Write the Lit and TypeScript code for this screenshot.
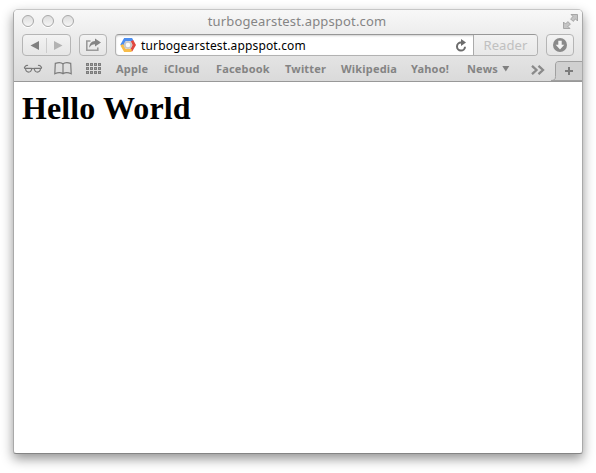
import { LitElement, html, css, svg } from "lit";
import { customElement } from "lit/decorators.js";

const bookmarks = [
  { label: "Apple", width: 48 },
  { label: "iCloud", width: 52 },
  { label: "Facebook", width: 69 },
  { label: "Twitter", width: 56 },
  { label: "Wikipedia", width: 70 },
  { label: "Yahoo!", width: 56 },
  { label: "News", width: 35 },
];

const gridDots = [0, 1, 2, 3].flatMap((c) =>
  [0, 1, 2].map(
    (r) => svg`<rect x=${c * 4 + 0.5} y=${r * 4 + 0.5} width="2" height="2" fill="#a0a0a0" stroke="#7d7d7d"/>`
  )
);

@customElement("app-root")
export class AppRoot extends LitElement {
  static styles = css`
    :host {
      display: block;
      box-sizing: border-box;
      height: 473px;
      padding: 9px 13px 19px;
      background: #fff;
      overflow: hidden;
      font-family: "Noto Sans", "Open Sans", sans-serif;
    }
    svg { display: block; flex: none; }
    .window {
      box-sizing: border-box;
      height: 445px;
      display: flex;
      flex-direction: column;
      border: 1px solid #a9a9a9;
      border-top-color: #c6c6c6;
      border-bottom-color: #858585;
      border-radius: 5px 5px 3px 3px;
      background: #fff;
      box-shadow: 0 5px 12px rgba(0, 0, 0, 0.42);
      overflow: hidden;
    }
    .chrome {
      flex: none;
      box-sizing: border-box;
      height: 72px;
      background: linear-gradient(#f8f8f8, #e9e9e9 45%, #dadada);
      border-bottom: 1px solid #989898;
    }
    .titlebar {
      display: grid;
      grid-template-columns: 60px 1fr 60px;
      height: 24px;
    }
    .lights { display: flex; gap: 8px; padding: 5px 0 0 8px; }
    .light {
      box-sizing: border-box;
      width: 12px;
      height: 12px;
      border: 1px solid #a8a8a8;
      border-radius: 50%;
      background: linear-gradient(#dcdcdc, #f5f5f5);
      box-shadow: 0 1px 0 #fff;
    }
    .title {
      text-align: center;
      font-size: 13px;
      line-height: 23px;
      letter-spacing: 0.16px;
      color: #858585;
      white-space: nowrap;
      padding-right: 2px;
    }
    .expand { justify-self: end; margin: 4px 4px 0 0; }
    .toolbar { display: flex; gap: 8px; height: 22px; padding: 0 8px; }
    .button {
      box-sizing: border-box;
      height: 22px;
      border: 1px solid #b5b5b5;
      border-radius: 4px;
      background: linear-gradient(#f3f3f3, #e6e6e6);
      display: flex;
      align-items: center;
      justify-content: center;
    }
    .nav { width: 49px; }
    .square { width: 28px; }
    .address {
      flex: 1;
      box-sizing: border-box;
      display: flex;
      align-items: center;
      border: 1px solid #b2b2b2;
      border-top-color: #979797;
      border-radius: 4px;
      background: #fff;
      box-shadow: inset 0 1px 2px rgba(0, 0, 0, 0.18);
      overflow: hidden;
    }
    .favicon { margin: 0 5px 0 4px; }
    .url {
      flex: 1;
      font-size: 12px;
      line-height: 20px;
      letter-spacing: 0.15px;
      color: #000;
      white-space: nowrap;
      padding-top: 1px;
    }
    .reload { margin: 1px 6px 0 0; }
    .reader {
      box-sizing: border-box;
      width: 64px;
      height: 20px;
      border-left: 1px solid #aaa;
      background: linear-gradient(#f2f2f2, #e8e8e8);
      text-align: center;
      font-size: 13px;
      line-height: 20px;
      letter-spacing: 0.1px;
      color: #c0c0c0;
    }
    .bookmarks { display: flex; height: 25px; }
    .tools { display: flex; width: 102px; box-sizing: border-box; padding: 6px 0 0 9px; }
    .book { margin-left: 11px; }
    .grid { margin: 1px 0 0 14px; }
    .link {
      font-size: 11px;
      line-height: 26px;
      font-weight: 700;
      letter-spacing: 0.18px;
      color: #848484;
      white-space: nowrap;
    }
    .caret { margin-top: 10px; }
    .more { margin: 9px 0 0 21px; }
    .newtab { margin: 5px 0 0 auto; }
    .page { flex: 1; padding: 8px; }
    h1 {
      margin: 0;
      font: 700 32px/37px "Liberation Serif", "Times New Roman", serif;
      letter-spacing: 0.12px;
      color: #000;
    }
  `;

  render() {
    return html`
      <div class="window">
        <div class="chrome">
          <div class="titlebar">
            <div class="lights"><i class="light"></i><i class="light"></i><i class="light"></i></div>
            <div class="title">turbogearstest.appspot.com</div>
            <svg class="expand" width="15" height="15" viewBox="0 0 15 15" fill="#c4c4c4" stroke="#999" stroke-width=".8">
              <path d="M8 .5h6.5V7l-2-2-2.4 2.4-2.5-2.500L10 2.500z" />
              <path d="M.5 8l2 2 2.400-2.400 2.500 2.500L5 12.500l2 2H.5z" />
            </svg>
          </div>
          <div class="toolbar">
            <div class="button nav">
              <svg width="47" height="20" viewBox="0 0 47 20">
                <path d="M7.5 10.5l8.5-4.500v9z" fill="#808080" />
                <path d="M23.5 3v15" stroke="#cdcdcd" />
                <path d="M39.5 10.5L31 6v9z" fill="#b3b3b3" />
              </svg>
            </div>
            <div class="button square">
              <svg width="18" height="16" viewBox="0 0 18 16" fill="none">
                <path d="M6.5 4H2.800v9.200h11V10.500" stroke="#9a9a9a" stroke-width="1.6" />
                <path d="M11 1.500l6 4-6 4V7.200C8.500 7.200 6.800 8.200 5.200 10.800 5.300 6.800 7.600 4.200 11 4.100z" fill="#858585" />
              </svg>
            </div>
            <div class="address">
              <svg class="favicon" width="16" height="16" viewBox="0 0 16 16" fill="none" stroke-width="3">
                <path d="M1.600 8.500L5 2.600h6.200l1 1.700" stroke="#4b8df0" />
                <path d="M11.900 3.800L14.300 8l-3.400 5.700" stroke="#e04840" />
                <path d="M11.600 13.400H5L1.700 7.700" stroke="#f8bd4a" />
                <circle cx="8" cy="8" r="3.200" fill="#fafafa" stroke="#c8c8c8" stroke-width="1.800" />
              </svg>
              <div class="url">turbogearstest.appspot.com</div>
              <svg class="reload" width="12" height="14" viewBox="0 0 12 14">
                <path d="M6.5 3.5H6a4 4 0 1 0 4 4.2" fill="none" stroke="#6c6c6c" stroke-width="2" />
                <path d="M6 0l5 3.6L6 7z" fill="#6c6c6c" />
              </svg>
              <div class="reader">Reader</div>
            </div>
            <div class="button square">
              <svg width="14" height="14" viewBox="0 0 14 14">
                <circle cx="7" cy="7" r="7" fill="#8a8a8a" />
                <path d="M5.300 2.800h3.400v4h2.600L7 11.600 2.700 6.800h2.600z" fill="#f5f5f5" />
              </svg>
            </div>
          </div>
          <div class="bookmarks">
            <div class="tools">
              <svg width="20" height="14" viewBox="0 0 20 14" fill="none" stroke="#787878" stroke-width="1.1">
                <path d="M1.200 6C2.200 3.800 3.500 2.800 5 3.600M18.800 6c-1-2.200-2.300-3.200-3.800-2.400M1 6.300h7.800M11.200 6.300H19M8.700 7c.8-.9 1.800-.9 2.600 0" />
                <path d="M2.600 6.500c-.2 4.800 5.800 4.800 6.100 0zM11.300 6.500c.3 4.800 6.300 4.800 6.100 0z" />
              </svg>
              <svg class="book" width="18" height="13" viewBox="0 0 18 13" fill="none" stroke="#7c7c7c" stroke-width="1.2">
                <path d="M9 2C7.500.4 4 .5 1.300 1.300L.8 11.800c2.700-1.300 6.500-1.200 8.200 0 1.700-1.200 5.500-1.300 8.200 0L16.700 1.300C14 .5 10.500.4 9 2zM9 2v9.800" />
              </svg>
              <svg class="grid" width="15" height="11" viewBox="0 0 15 11">${gridDots}</svg>
            </div>
            ${bookmarks.map((b) => html`<div class="link" style="width:${b.width}px">${b.label}</div>`)}
            <svg class="caret" width="8" height="6" viewBox="0 0 8 6"><path d="M.3 0h7L3.8 5.5z" fill="#808080" /></svg>
            <svg class="more" width="14" height="10" viewBox="0 0 14 10">
              <path d="M1 .8L5.500 5 1 9.200M7.500 .8L12 5l-4.500 4.200" fill="none" stroke="#8a8a8a" stroke-width="2.3" />
            </svg>
            <svg class="newtab" width="31" height="20" viewBox="0 0 31 20">
              <path d="M0 19.500c3 0 4.500-1 4.500-4V4C4.500 1.500 5.500.5 8 .5h24v19z" fill="#d0d0d0" stroke="#a0a0a0" />
              <path d="M18 6v8M14 10h8" stroke="#7c7c7c" stroke-width="2" />
            </svg>
          </div>
        </div>
        <div class="page"><h1>Hello World</h1></div>
      </div>
    `;
  }
}
